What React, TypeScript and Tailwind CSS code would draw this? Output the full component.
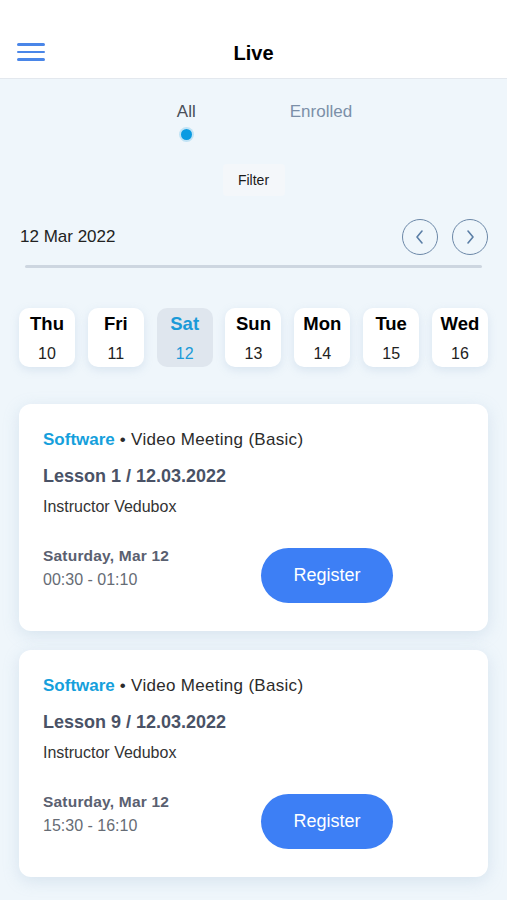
import React, { useState } from "react";

const days = [
  { name: "Thu", num: 10 },
  { name: "Fri", num: 11 },
  { name: "Sat", num: 12 },
  { name: "Sun", num: 13 },
  { name: "Mon", num: 14 },
  { name: "Tue", num: 15 },
  { name: "Wed", num: 16 },
];

const lessons = [
  { title: "Lesson 1 / 12.03.2022", time: "00:30 - 01:10" },
  { title: "Lesson 9 / 12.03.2022", time: "15:30 - 16:10" },
];

const LessonCard = ({ title, time }: { title: string; time: string }) => (
  <div className="bg-white rounded-[12px] shadow-[0_4px_16px_rgba(150,180,210,0.28)] px-6 pt-[25px] pb-[28px]">
    <p className="text-[17px] leading-[22px] text-[#2b2b2b]">
      <span className="font-bold text-[#159fdc]">Software</span>
      <span className="tracking-[0.3px]"> • Video Meeting (Basic)</span>
    </p>
    <h3 className="mt-[14px] text-[18px] leading-[22px] font-bold text-[#4a5266]">{title}</h3>
    <p className="mt-[10px] text-[16px] leading-[20px] text-[#333]">Instructor Vedubox</p>
    <div className="mt-[29px] flex items-start">
      <div className="w-[218px]">
        <p className="text-[15.5px] leading-[20px] font-bold text-[#5a6070] tracking-[0.2px]">Saturday, Mar 12</p>
        <p className="mt-[4px] text-[16px] leading-[20px] text-[#666c75]">{time}</p>
      </div>
      <button className="mt-[2px] w-[132px] h-[55px] rounded-full bg-[#3d7ff5] text-white text-[18px]">
        Register
      </button>
    </div>
  </div>
);

export default function App() {
  const [selected, setSelected] = useState(12);

  return (
    <div className="min-h-[900px] bg-[#eff6fb] font-['Liberation_Sans',Arial,sans-serif]">
      {/* header */}
      <div className="h-[79px] bg-white border-b border-[#e3e8ee] relative flex items-end justify-center pb-[13px]">
        <button className="absolute left-[17px] top-[43px] flex flex-col gap-[5px]">
          <span className="block w-[28px] h-[2.5px] rounded-full bg-[#4a86e8]" />
          <span className="block w-[28px] h-[2.5px] rounded-full bg-[#4a86e8]" />
          <span className="block w-[28px] h-[2.5px] rounded-full bg-[#4a86e8]" />
        </button>
        <h1 className="text-[20px] leading-[24px] font-bold text-black">Live</h1>
      </div>

      {/* tabs */}
      <div className="flex justify-center gap-[94px] pt-[22px] pl-[22px]">
        <div className="flex flex-col items-center">
          <span className="text-[17px] leading-[22px] text-[#4a4f59]">All</span>
          <span className="mt-[6px] w-[11px] h-[11px] rounded-full bg-[#0a9be2] shadow-[0_0_0_2px_rgba(10,155,226,0.2)]" />
        </div>
        <span className="text-[17px] leading-[22px] text-[#7b8fa8]">Enrolled</span>
      </div>

      <div className="flex justify-center mt-[24px]">
        <button className="w-[62px] h-[32px] bg-[#f4f7fa] rounded text-[14px] text-[#1a1a1a]">Filter</button>
      </div>

      {/* date row */}
      <div className="flex items-center justify-between pl-[20px] pr-[19px] mt-[23px]">
        <span className="text-[17px] text-[#222]">12 Mar 2022</span>
        <div className="flex gap-[14px]">
          <button className="w-[36px] h-[36px] rounded-full border-[1.5px] border-[#6c88a8] flex items-center justify-center">
            <svg width="16" height="16" viewBox="0 0 16 16" fill="none">
              <path d="M10 2 L5 8 L10 14" stroke="#5a7ea6" strokeWidth="1.6" strokeLinecap="round" strokeLinejoin="round" />
            </svg>
          </button>
          <button className="w-[36px] h-[36px] rounded-full border-[1.5px] border-[#6c88a8] flex items-center justify-center">
            <svg width="16" height="16" viewBox="0 0 16 16" fill="none">
              <path d="M6 2 L11 8 L6 14" stroke="#5a7ea6" strokeWidth="1.6" strokeLinecap="round" strokeLinejoin="round" />
            </svg>
          </button>
        </div>
      </div>
      <div className="mx-[25px] mt-[10px] h-[3px] rounded-full bg-[#cdd6e0]" />

      {/* days */}
      <div className="flex justify-between px-[19px] mt-[40px]">
        {days.map((d) => {
          const active = d.num === selected;
          return (
            <button
              key={d.num}
              onClick={() => setSelected(d.num)}
              className={
                active
                  ? "w-[56px] h-[59px] rounded-[10px] bg-[#dfe6ee] flex flex-col items-center pt-[5px]"
                  : "w-[56px] h-[59px] rounded-[10px] bg-white shadow-[0_3px_8px_rgba(150,180,210,0.25)] flex flex-col items-center pt-[5px]"
              }
            >
              <span className={active ? "text-[18.5px] leading-[22px] font-bold text-[#1a9ad8]" : "text-[18.5px] leading-[22px] font-bold text-black"}>
                {d.name}
              </span>
              <span className={active ? "mt-[9px] text-[16px] leading-[20px] text-[#1a9ad8]" : "mt-[9px] text-[16px] leading-[20px] text-[#222]"}>
                {d.num}
              </span>
            </button>
          );
        })}
      </div>

      {/* lessons */}
      <div className="flex flex-col gap-[19px] px-[19px] mt-[37px] pb-[20px]">
        {lessons.map((l) => (
          <LessonCard key={l.title} title={l.title} time={l.time} />
        ))}
      </div>
    </div>
  );
}
